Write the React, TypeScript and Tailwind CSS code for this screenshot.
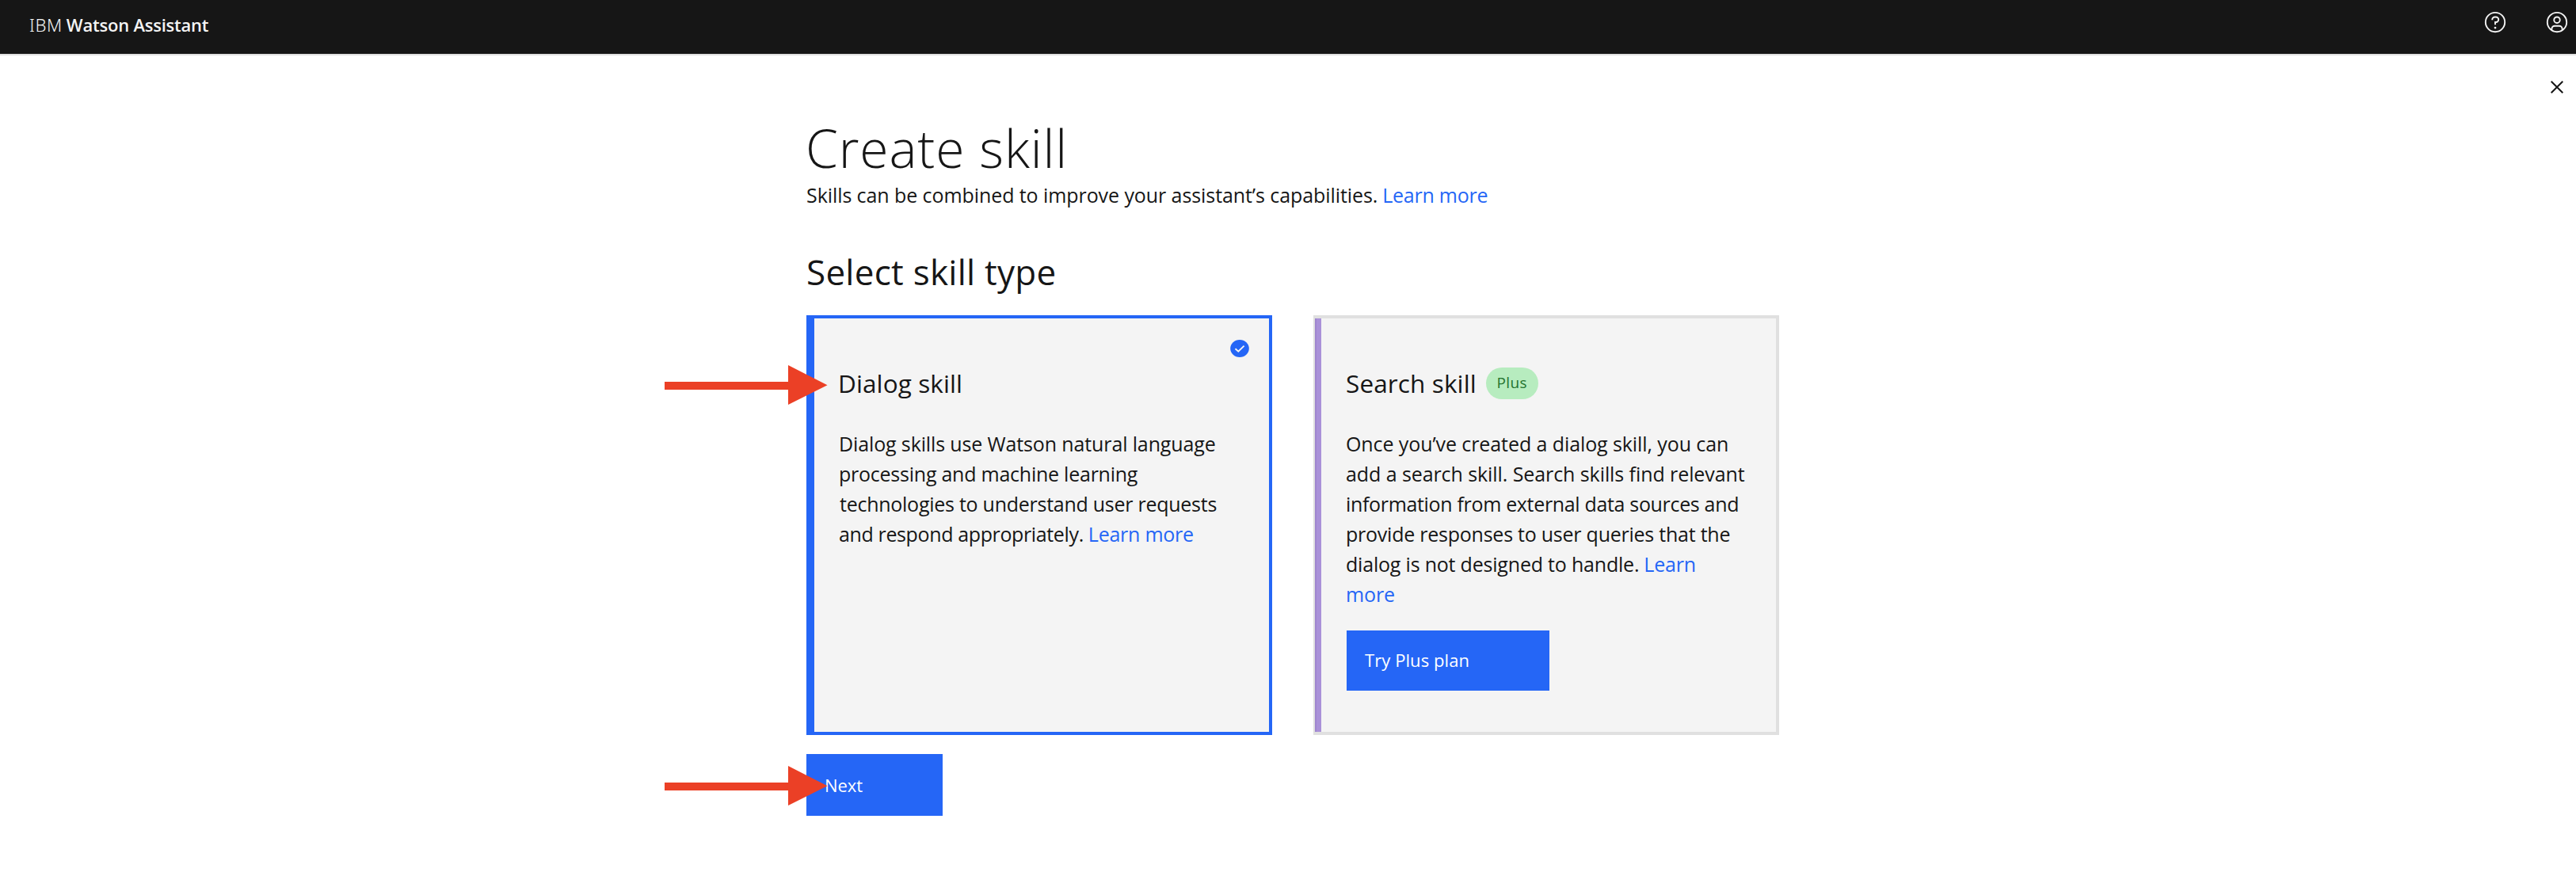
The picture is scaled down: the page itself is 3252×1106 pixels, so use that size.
import type { ReactNode } from 'react';

function HelpIcon() {
  return (
    <svg viewBox="0 0 32 32" className="size-[30px] fill-[#f4f4f4]" aria-label="Help">
      <path d="M16,2A14,14,0,1,0,30,16,14,14,0,0,0,16,2Zm0,26A12,12,0,1,1,28,16,12,12,0,0,1,16,28Z" />
      <circle cx="16" cy="23.5" r="1.5" />
      <path d="M17,8H15.5A4.49,4.49,0,0,0,11,12.49V13h2v-.5A2.5,2.5,0,0,1,15.5,10H17a2.5,2.5,0,0,1,0,5H15v4.5h2V17a4.5,4.5,0,0,0,0-9Z" />
    </svg>
  );
}

function UserIcon() {
  return (
    <svg viewBox="0 0 32 32" className="size-[30px] fill-[#f4f4f4]" aria-label="Account">
      <path d="M16,8a5,5,0,1,0,5,5A5,5,0,0,0,16,8Zm0,8a3,3,0,1,1,3-3A3,3,0,0,1,16,16Z" />
      <path d="M16,2A14,14,0,1,0,30,16,14,14,0,0,0,16,2ZM10,26.38V25a3,3,0,0,1,3-3h6a3,3,0,0,1,3,3v1.38a11.9,11.9,0,0,1-12,0Zm13.99-1.45A5,5,0,0,0,19,20H13a5,5,0,0,0-4.99,4.93,12,12,0,1,1,15.98,0Z" />
    </svg>
  );
}

function CloseIcon() {
  return (
    <svg viewBox="0 0 16 16" className="size-4" aria-label="Close">
      <path d="M0.7 0.7L15.3 15.3M15.3 0.7L0.7 15.3" fill="none" stroke="#161616" strokeWidth="2" />
    </svg>
  );
}

function CheckBadge() {
  return (
    <svg viewBox="0 0 24 22" className="h-[22px] w-6" aria-label="Selected">
      <ellipse cx="12" cy="11" rx="11.8" ry="10.9" fill="#2566f6" />
      <path d="M6.5 11.2L10.3 14.6L17.6 7.6" fill="none" stroke="#f4f4f4" strokeWidth="1.9" />
    </svg>
  );
}

function Arrow() {
  return (
    <svg viewBox="0 0 206 50" className="h-[50px] w-[206px]" aria-hidden="true">
      <path d="M0 21H156V0L205.5 25.2L156 50V31H0Z" fill="#eb4026" />
    </svg>
  );
}

function Line({ className, children }: { className: string; children: ReactNode }) {
  return <span className={`block whitespace-nowrap ${className}`}>{children}</span>;
}

function Link({ className, children }: { className: string; children: ReactNode }) {
  return <a className={`text-[#2566f6] ${className}`}>{children}</a>;
}

export default function App() {
  return (
    <div className="flex h-[1106px] w-[3252px] flex-col overflow-hidden bg-white font-['Open_Sans',sans-serif] text-[#161616]">
      <header className="flex h-[70px] items-start justify-between border-b-2 border-[#e0e0e0] bg-[#161616] pr-[9px] pl-[37px] text-[#f4f4f4]">
        <div className="flex h-[62px] items-center text-[22px] leading-[30px]">
          <span className="font-['Noto_Sans',sans-serif] font-light tracking-[0.63px]">IBM</span>
          <span className="ml-[5px] font-semibold tracking-[-0.22px] whitespace-nowrap">Watson Assistant</span>
        </div>
        <nav className="flex gap-12 pt-[13px]">
          <HelpIcon />
          <UserIcon />
        </nav>
      </header>

      <div className="flex h-[70px] shrink-0 justify-end pt-8 pr-4">
        <CloseIcon />
      </div>

      <main className="ml-[1018px] flex w-[1228px] flex-col pt-px">
        <h1 className="ml-[-1px] h-[90px] text-[66px] leading-[90px] font-light tracking-[0.85px] whitespace-nowrap">
          Create skill
        </h1>
        <p className="mt-[-4px] text-[25px] leading-[38px] whitespace-nowrap">
          <span className="tracking-[-0.08px]">Skills can be combined to improve your assistant’s capabilities.</span>
          <Link className="ml-[6px] tracking-[-0.24px]">Learn more</Link>
        </p>

        <h2 className="mt-12 h-[60px] text-[44px] leading-[60px] tracking-[0.26px] whitespace-nowrap">
          Select skill type
        </h2>

        <div className="mt-[25px] flex gap-[52px]">
          <section className="relative flex h-[530px] w-[588px] flex-col border-4 border-l-[10px] border-[#2566f6] bg-[#f4f4f4] pl-[31px]">
            <div className="absolute top-[27px] right-[25px]">
              <CheckBadge />
            </div>
            <div className="absolute top-[59px] left-[-189px]">
              <Arrow />
            </div>
            <h3 className="ml-[-1px] mt-[60px] h-11 text-[31.5px] leading-[44px] tracking-[0.1px] whitespace-nowrap">Dialog skill</h3>
            <p className="mt-[35px] text-[25px] leading-[38px]">
              <Line className="tracking-[-0.13px]">Dialog skills use Watson natural language</Line>
              <Line className="tracking-[-0.24px]">processing and machine learning</Line>
              <Line className="pl-px tracking-[-0.26px]">technologies to understand user requests</Line>
              <Line className="tracking-[-0.37px]">
                and respond appropriately.
                <Link className="ml-[6px] tracking-[-0.24px]">Learn more</Link>
              </Line>
            </p>
          </section>

          <section className="flex h-[530px] w-[588px] border-4 border-l-2 border-[#e0e0e0] bg-[#f4f4f4]">
            <div className="w-2 border-l-2 border-[#9f86cf] bg-[#a991d8]" />
            <div className="flex flex-col items-start pl-[31px]">
              <div className="mt-[60px] flex h-11 items-center">
                <h3 className="text-[31.5px] leading-[44px] tracking-[0.12px] whitespace-nowrap">Search skill</h3>
                <span className="ml-[12px] flex h-10 w-[66px] items-center justify-center rounded-full bg-[#b7ecbf] pb-0.5 text-[19px] tracking-[0.41px] text-[#24742f]">
                  Plus
                </span>
              </div>
              <p className="mt-[35px] text-[25px] leading-[38px]">
                <Line className="tracking-[-0.09px]">Once you’ve created a dialog skill, you can</Line>
                <Line className="tracking-[-0.08px]">add a search skill. Search skills find relevant</Line>
                <Line className="tracking-[-0.33px]">information from external data sources and</Line>
                <Line className="tracking-[-0.24px]">provide responses to user queries that the</Line>
                <Line className="tracking-[-0.2px]">
                  dialog is not designed to handle.
                  <Link className="ml-[6px] tracking-[-0.17px]">Learn</Link>
                </Line>
                <Line className="tracking-[-0.13px]">
                  <Link className="">more</Link>
                </Line>
              </p>
              <button className="mt-[27px] ml-px h-[76px] w-64 bg-[#2566f6] pb-px pl-[23px] text-left text-[22px] tracking-[0.08px] text-white">
                Try Plus plan
              </button>
            </div>
          </section>
        </div>

        <div className="relative mt-6 flex">
          <button className="h-[78px] w-[172px] bg-[#2566f6] pt-px pl-[23px] text-left text-[22px] tracking-[-0.1px] text-white">
            Next
          </button>
          <div className="absolute top-[15px] left-[-179px]">
            <Arrow />
          </div>
        </div>
      </main>
    </div>
  );
}
